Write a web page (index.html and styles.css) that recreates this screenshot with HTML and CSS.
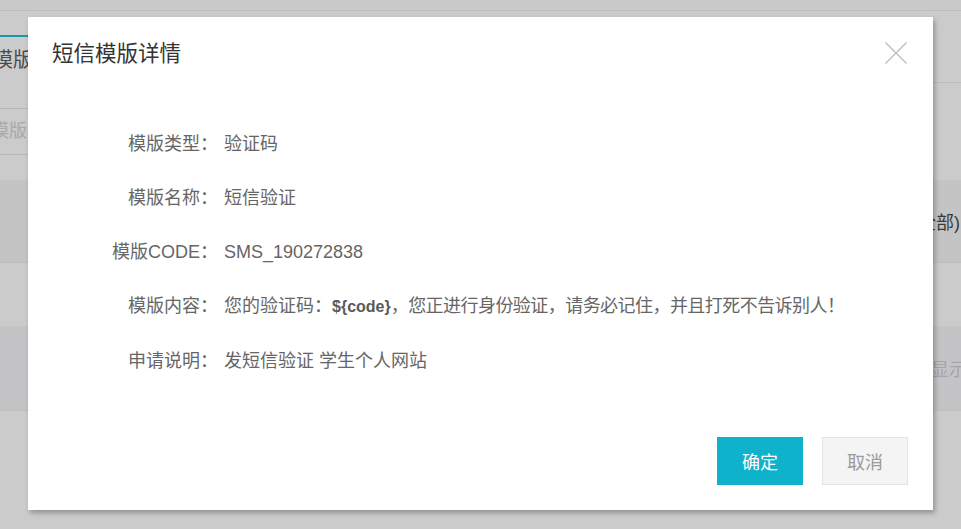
FILE: index.html
```html
<!DOCTYPE html>
<html lang="zh-CN">
<head>
<meta charset="utf-8">
<title>短信模版详情</title>
<link rel="stylesheet" href="styles.css">
</head>
<body>
<div class="page">
  <div class="topbar"></div>
  <div class="tabbar">
    <div class="tab active">模版管理</div>
    <div class="tab-fill"></div>
  </div>
  <div class="search"><span class="placeholder">模版名称</span></div>
  <div class="table">
    <div class="thead"><span>状态(全部)</span></div>
    <div class="trow"></div>
    <div class="trow hover"><span class="muted">显示全部</span></div>
  </div>
</div>

<div class="dialog">
  <div class="dialog-head">
    <h2 class="dialog-title">短信模版详情</h2>
    <svg class="close" width="22" height="22" viewBox="0 0 22 22"><path d="M0.5 0.5 L21.5 21.5 M21.5 0.5 L0.5 21.5" stroke="#bdbdbd" stroke-width="1.4" fill="none"/></svg>
  </div>
  <div class="detail">
    <div class="label">模版类型：</div><div class="value">验证码</div>
    <div class="label">模版名称：</div><div class="value">短信验证</div>
    <div class="label">模版CODE：</div><div class="value">SMS_190272838</div>
    <div class="label">模版内容：</div><div class="value">您的验证码：<b class="code">${code}</b><span class="tight">，您正进行身份验证，请务必记住，并且打死不告诉别人！</span></div>
    <div class="label">申请说明：</div><div class="value">发短信验证 学生个人网站</div>
  </div>
  <div class="dialog-foot">
    <button class="btn btn-primary">确定</button>
    <button class="btn btn-default">取消</button>
  </div>
</div>
</body>
</html>
```

FILE: styles.css
```css
html, body {
  margin: 0;
  padding: 0;
}
body {
  width: 961px;
  height: 529px;
  overflow: hidden;
  background: #cbcbcb;
  font-family: "Liberation Sans", "Noto Sans CJK SC", sans-serif;
  position: relative;
}
.page {
  width: 961px;
  height: 529px;
  overflow: hidden;
}
.topbar {
  height: 10px;
  background: #c8c9c8;
  border-bottom: 1px solid #bdbdbd;
}
.tabbar {
  margin-top: 24px;
  height: 48px;
  display: flex;
}
.tab {
  box-sizing: border-box;
  width: 140px;
  height: 48px;
  border-top: 2px solid #1599a8;
  font-size: 20px;
  line-height: 46px;
  color: #4a4a4a;
  text-indent: -7px;
  white-space: nowrap;
}
.tab-fill {
  flex: 1;
  border-bottom: 1px solid #bdbdbd;
}
.search {
  margin-top: 25px;
  margin-left: -20px;
  width: 320px;
  height: 45px;
  border: 1px solid #b7b7b7;
  padding-left: 10px;
  font-size: 18px;
  line-height: 45px;
  color: #a9a9a9;
  white-space: nowrap;
}
.table {
  margin-top: 25px;
}
.thead {
  height: 82px;
  background: #c4c4c4;
  border-bottom: 1px solid #bdbdbd;
  display: flex;
  align-items: center;
  justify-content: flex-end;
  padding-right: 1px;
  font-size: 18px;
  color: #3a3a3a;
  white-space: nowrap;
}
.trow {
  height: 63px;
  background: #cbcbcb;
  display: flex;
  align-items: center;
  white-space: nowrap;
  font-size: 18px;
}
.trow.hover {
  height: 84px;
  background: #c4c4c7;
  border-bottom: 1px solid #bdbdbd;
  padding-left: 931px;
}
.muted {
  color: #a6a6a6;
}

/* dialog */
.dialog {
  position: absolute;
  left: 28px;
  top: 17px;
  width: 905px;
  height: 493px;
  box-sizing: border-box;
  background: #fff;
  box-shadow: 2px 3px 5px rgba(0, 0, 0, 0.28);
  padding: 25px 25px 25px 24px;
  display: flex;
  flex-direction: column;
}
.dialog-head {
  display: flex;
  justify-content: space-between;
  align-items: flex-start;
}
.dialog-title {
  margin: 1px 0 0 0;
  font-size: 21.5px;
  line-height: 22px;
  font-weight: normal;
  color: #333;
}
.close {
  display: block;
  margin-right: 1px;
}
.detail {
  margin-top: 70px;
  display: grid;
  grid-template-columns: 166px 1fr;
  column-gap: 6px;
  row-gap: 36px;
  font-size: 18px;
  line-height: 18px;
  color: #666;
}
.label {
  text-align: right;
  white-space: nowrap;
}
.value {
  white-space: nowrap;
}
.code {
  font-size: 16px;
  font-weight: bold;
  color: #595959;
}
.tight {
  letter-spacing: -0.55px;
}
.dialog-foot {
  margin-top: auto;
  display: flex;
  justify-content: flex-end;
  gap: 19px;
}
.btn {
  box-sizing: border-box;
  width: 86px;
  height: 48px;
  margin: 0;
  font-family: "Liberation Sans", "Noto Sans CJK SC", sans-serif;
  font-size: 18px;
  border: 0;
  padding: 0;
}
.btn-primary {
  background: #0fb2cc;
  color: #fff;
}
.btn-default {
  background: #f4f4f4;
  border: 1px solid #e4e4e4;
  color: #9a9a9a;
}
```
